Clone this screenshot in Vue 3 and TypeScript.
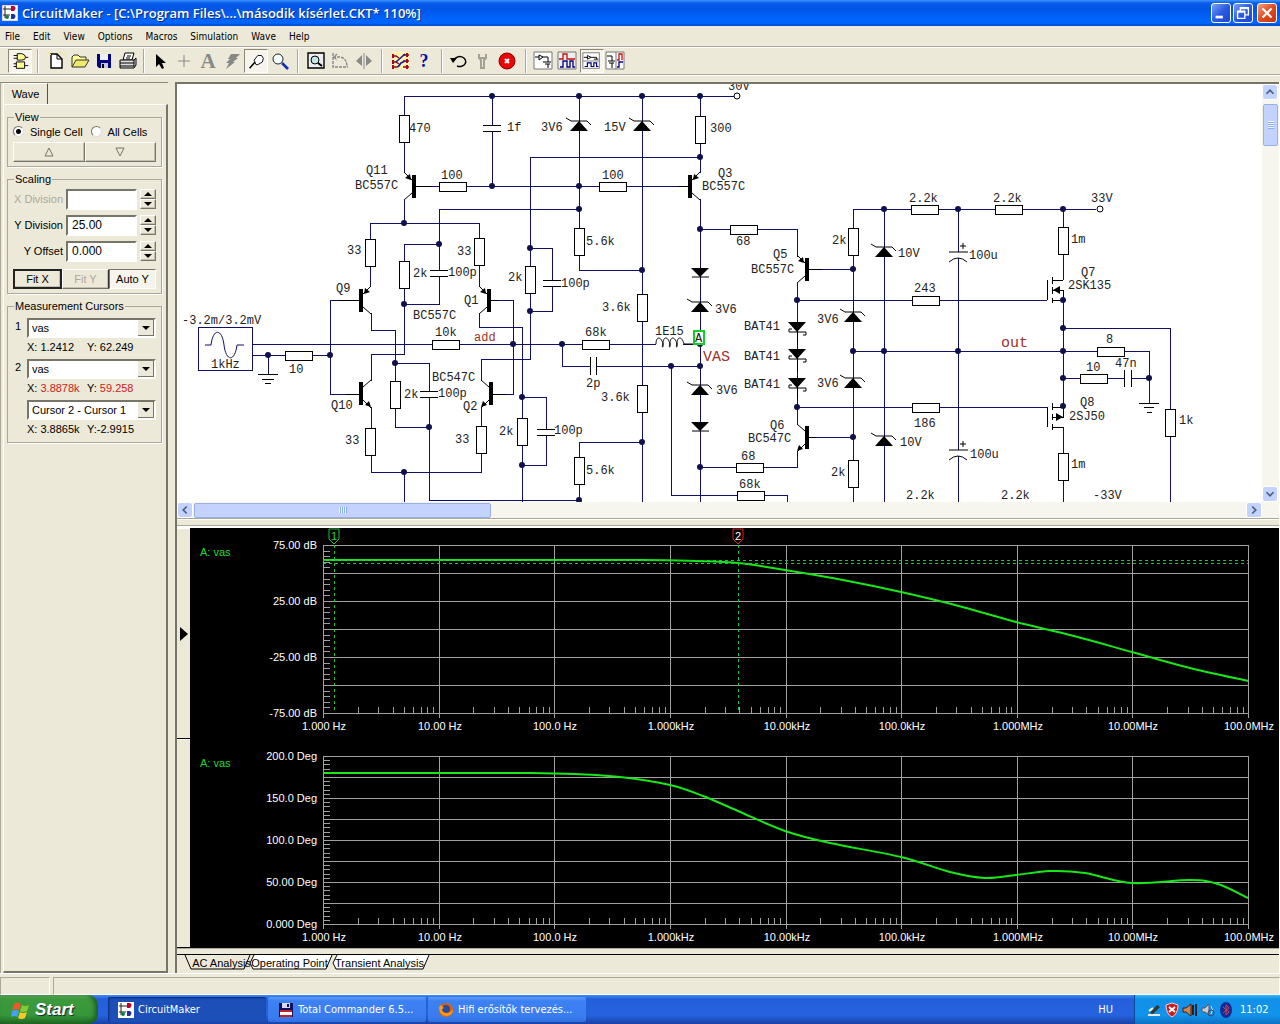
<script setup lang="ts">
import { ref } from 'vue'

type Pt = [number, number]
interface Label { x: number; y: number; t: string }
interface Transistor { x: number; y: number; sx: number; sy: number; pnp: boolean }

const menus = ['File', 'Edit', 'View', 'Options', 'Macros', 'Simulation', 'Wave', 'Help']
const viewMode = ref('single')
const yDivision = ref('25.00')
const yOffset = ref('0.000')

const wires = [
  'M404 96H734', 'M404 96V173', 'M404 200V223', 'M370 223H479', 'M370 223V287', 'M415 186H690',
  'M492 96V125M492 131V186', 'M579 96V270H642', 'M642 96V502', 'M700 96V173', 'M700 157H530V359H481V381',
  'M439 209H579', 'M439 209V270M439 277V304H404', 'M404 244H439', 'M404 244V354H371V381',
  'M371 313V330H395V427H429', 'M395 363H429V391M429 398V500H579', 'M330 300H360M330 300V394H360',
  'M252 344H656', 'M683 344H700', 'M252 355H330', 'M268 355V374', 'M371 407V472H481V407', 'M404 472V502',
  'M479 223V287', 'M479 313V327H522V502', 'M490 300H513V394H492', 'M530 248H552V280M552 286V311H530',
  'M522 397H546V429M546 435V465H522', 'M562 344V366H590M596 366H700', 'M671 366V495H787V502',
  'M642 442H579V500', 'M700 199V502', 'M700 229H797V257', 'M700 467H797V451', 'M797 283V425',
  'M808 269H853', 'M808 437H853', 'M853 502V209H1096', 'M884 209V502', 'M958 209V252M958 258V450M958 456V502',
  'M797 300H1047', 'M797 407H1047', 'M853 351H1149V403', 'M1063 209V280', 'M1063 300V407',
  'M1063 427V502', 'M1063 328H1170V502', 'M1063 378H1124M1131 378H1149',
]
const dots: Pt[] = [
  [492, 96], [579, 96], [642, 96], [700, 96], [492, 186], [579, 186], [404, 223], [700, 157], [579, 209],
  [439, 244], [404, 304], [330, 355], [268, 355], [395, 363], [429, 427], [404, 472], [530, 248], [530, 311],
  [642, 270], [513, 344], [562, 344], [700, 344], [671, 366], [700, 366], [522, 397], [522, 465], [642, 442],
  [579, 500], [700, 229], [700, 467], [853, 269], [853, 351], [853, 437], [884, 209], [884, 351], [958, 209],
  [958, 351], [797, 300], [797, 407], [1063, 209], [1063, 300], [1063, 328], [1063, 351], [1063, 378],
  [1063, 406], [1149, 378],
]
/* upright resistors: centre x, top y */
const upright: Pt[] = [
  [404, 115], [370, 239], [404, 261], [395, 381], [370, 428], [479, 238], [481, 426], [530, 266], [522, 418],
  [579, 228], [579, 457], [642, 294], [642, 385], [700, 116], [853, 228], [853, 460], [1063, 227], [1063, 453],
  [1170, 409],
]
/* lying resistors: left x, centre y */
const lying: Pt[] = [
  [439, 186], [599, 186], [432, 344], [285, 355], [582, 344], [730, 229], [736, 467], [737, 495], [911, 209],
  [995, 209], [912, 300], [912, 407], [1097, 351], [1080, 378],
]
const zeners: Pt[] = [
  [579, 121], [642, 121], [700, 302], [700, 385], [853, 312], [853, 378], [884, 247], [884, 436],
]
const diodes: Pt[] = [[700, 268], [700, 422]]
const schottkys: Pt[] = [[797, 322], [797, 349], [797, 378]]
const flatCaps: Pt[] = [[492, 125], [439, 270], [429, 391], [552, 280], [546, 429]]
const polarCaps: Pt[] = [[958, 252], [958, 450]]
const transistors: Transistor[] = [
  { x: 413, y: 186, sx: 1, sy: 1, pnp: true },
  { x: 362, y: 300, sx: -1, sy: 1, pnp: true },
  { x: 362, y: 394, sx: -1, sy: -1, pnp: false },
  { x: 488, y: 300, sx: 1, sy: 1, pnp: true },
  { x: 490, y: 394, sx: 1, sy: -1, pnp: false },
  { x: 691, y: 186, sx: -1, sy: 1, pnp: true },
  { x: 806, y: 269, sx: 1, sy: 1, pnp: true },
  { x: 806, y: 438, sx: 1, sy: -1, pnp: false },
]
const rows: [number, number, string][] = [
  [728, 90, '30V'], [409, 132, '470'], [507, 131, '1f'], [541, 131, '3V6'], [604, 131, '15V'], [710, 132, '300'],
  [366, 174, 'Q11'], [355, 189, 'BC557C'], [441, 179, '100'], [602, 179, '100'], [718, 177, 'Q3'],
  [702, 190, 'BC557C'], [347, 254, '33'], [457, 255, '33'], [413, 277, '2k'], [448, 276, '100p'],
  [508, 281, '2k'], [561, 287, '100p'], [586, 245, '5.6k'], [736, 245, '68'], [336, 292, 'Q9'],
  [464, 304, 'Q1'], [413, 319, 'BC557C'], [182, 324, '-3.2m/3.2mV'], [211, 368, '1kHz'], [289, 373, '10'],
  [435, 336, '10k'], [585, 336, '68k'], [655, 335, '1E15'], [602, 311, '3.6k'], [715, 313, '3V6'],
  [586, 387, '2p'], [601, 401, '3.6k'], [716, 394, '3V6'], [432, 381, 'BC547C'], [404, 398, '2k'],
  [438, 397, '100p'], [331, 409, 'Q10'], [463, 410, 'Q2'], [345, 444, '33'], [455, 443, '33'],
  [499, 435, '2k'], [554, 434, '100p'], [586, 474, '5.6k'], [741, 460, '68'], [739, 488, '68k'],
  [773, 258, 'Q5'], [751, 273, 'BC557C'], [832, 244, '2k'], [898, 257, '10V'], [969, 259, '100u'],
  [909, 202, '2.2k'], [993, 202, '2.2k'], [1091, 202, '33V'], [914, 292, '243'], [817, 323, '3V6'],
  [744, 330, 'BAT41'], [744, 360, 'BAT41'], [744, 388, 'BAT41'], [817, 387, '3V6'], [770, 429, 'Q6'],
  [748, 442, 'BC547C'], [914, 427, '186'], [900, 446, '10V'], [970, 458, '100u'], [831, 476, '2k'],
  [906, 499, '2.2k'], [1001, 499, '2.2k'], [1093, 499, '-33V'], [1071, 243, '1m'], [1081, 276, 'Q7'],
  [1068, 289, '2SK135'], [1106, 343, '8'], [1086, 371, '10'], [1115, 367, '47n'], [1179, 424, '1k'],
  [1080, 406, 'Q8'], [1069, 420, '2SJ50'], [1071, 468, '1m'],
]
const labels: Label[] = rows.map(([x, y, t]) => ({ x, y, t }))

/* logarithmic frequency axis: eight decades across the plot */
const left = 323
const right = 1248
const decade = (right - left) / 8
const gx = (n: number) => Math.round(left + n * decade)
const freqs = ['1.000 Hz', '10.00 Hz', '100.0 Hz', '1.000kHz', '10.00kHz', '100.0kHz', '1.000MHz', '10.00MHz', '100.0MHz']
const logTicks: number[] = []
for (let d = 0; d < 8; d++) for (let m = 2; m < 10; m++) logTicks.push(Math.round(left + decade * (d + Math.log10(m))))

interface Plot { top: number; step: number; lines: number; ticks: number; names: string[]; curve: Pt[] }
const plots: Plot[] = [
  {
    top: 545, step: 28, lines: 6, ticks: 30, names: ['75.00 dB', '25.00 dB', '-25.00 dB', '-75.00 dB'],
    curve: [[323, 560], [500, 560], [640, 560], [695, 561], [738, 563], [785, 570], [843, 580], [901, 592], [955, 605], [1016, 622],
      [1074, 636], [1132, 652], [1190, 668], [1248, 681]],
  },
  {
    top: 756, step: 21, lines: 8, ticks: 40, names: ['200.0 Deg', '150.0 Deg', '100.0 Deg', '50.00 Deg', '0.000 Deg'],
    curve: [[323, 773], [440, 773], [530, 773], [575, 774], [620, 777], [670, 785], [703, 796], [738, 811], [785, 831], [830, 843],
      [901, 857], [950, 872], [985, 878], [1016, 875], [1050, 871], [1085, 873], [1132, 883], [1190, 880], [1218, 884], [1248, 898]],
  },
]
const bottom = (p: Plot) => p.top + p.step * p.lines
const ticksOf = (p: Plot) => Array.from({ length: p.ticks - 1 }, (_, i) => Math.round(p.top + ((i + 1) * p.step * p.lines) / p.ticks))
/* smooth path through the samples */
const smooth = (pts: Pt[]) => {
  let d = `M${pts[0][0]} ${pts[0][1]}`
  for (let i = 0; i < pts.length - 1; i++) {
    const a = pts[Math.max(i - 1, 0)], b = pts[i], c = pts[i + 1], e = pts[Math.min(i + 2, pts.length - 1)]
    d += `C${b[0] + (c[0] - a[0]) / 6} ${b[1] + (c[1] - a[1]) / 6} ${c[0] - (e[0] - b[0]) / 6} ${c[1] - (e[1] - b[1]) / 6} ${c[0]} ${c[1]}`
  }
  return d
}
</script>

<template>
  <div class="desktop">
    <header class="titlebar">
      <svg class="ico" viewBox="0 0 16 16"><rect width="16" height="16" fill="#fff" /><path d="M1 4h8M3 1v12M1 10h7" stroke="#222" fill="none" /><path d="M9 1h3q3 2 0 5H9z" fill="#c00030" /><path d="M9 9h3q3 2 0 5H9z" fill="#2030a0" /><circle cx="5" cy="12" r="2" fill="#108040" /><path d="M0 0h16v16H0z" fill="none" stroke="#d8a8c8" /></svg>
      <h1>CircuitMaker - [C:\Program Files\...\második kísérlet.CKT* 110%]</h1>
      <button class="wb" aria-label="Minimize"><svg viewBox="0 0 20 20"><path d="M4 13h8v3H4z" fill="#fff" /></svg></button>
      <button class="wb" aria-label="Restore"><svg viewBox="0 0 20 20"><path d="M7 8V4h9v8h-4M7 5h9M4 8h8v8H4zM4 9h8" fill="none" stroke="#fff" stroke-width="1.5" /></svg></button>
      <button class="wb close" aria-label="Close"><svg viewBox="0 0 20 20"><path d="M5 5l10 10M15 5L5 15" stroke="#fff" stroke-width="2.4" /></svg></button>
    </header>

    <nav class="menubar"><button v-for="m in menus" :key="m">{{ m }}</button></nav>

    <div class="toolbar">
      <button class="on" aria-label="Parts"><svg viewBox="0 0 24 24"><path d="M9 4h5q4 1 4 4t-4 3H9zM5 6h4M5 9h4M18 8h3" fill="#ffff90" stroke="#000" /><path d="M8 13h9v7H8zM5 15h3M5 18h3M17 17h4" fill="#ffff90" stroke="#000" /></svg></button>
      <i class="sep"></i>
      <button aria-label="New"><svg viewBox="0 0 24 24"><path d="M7 5h6l5 5v9H7z" fill="#fff" stroke="#000" stroke-width="1.4" /><path d="M13 5v5h5" fill="none" stroke="#000" /><path d="M4 3l3 3M16 3v3M19 6l3-2" stroke="#f0ec60" /></svg></button>
      <button aria-label="Open"><svg viewBox="0 0 24 24"><path d="M4 18V8l2-2h4l2 2h6v3" fill="#ffff90" stroke="#333" /><path d="M4 18l4-7h13l-4 7z" fill="#f0e870" stroke="#333" /></svg></button>
      <button aria-label="Save"><svg viewBox="0 0 24 24"><path d="M5 5h14v14H7l-2-2z" fill="#000080" /><path d="M8 5h8v6H8z" fill="#eef" /><path d="M9 14h7v5H9z" fill="#c8c8d8" /><path d="M10 15h2v4h-2z" fill="#000" /></svg></button>
      <button aria-label="Print"><svg viewBox="0 0 24 24"><path d="M7 11l2-7h9l-2 7zM11 7h4M10 9h4" fill="#fff" stroke="#000" /><path d="M4 11h14l2-2v7l-2 3H4zM4 14h14M4 17h14M18 11v7" fill="#ddd" stroke="#000" /></svg></button>
      <i class="sep tight"></i>
      <button aria-label="Arrow"><svg viewBox="0 0 24 24"><path d="M8 5v13l3-3 3 5 2-1-2-5h4z" /></svg></button>
      <button aria-label="Wire"><svg viewBox="0 0 24 24"><path d="M12 6v12M6 12h12" stroke="#888" fill="none" /></svg></button>
      <button class="serif" aria-label="Text">A</button>
      <button aria-label="Delete"><svg viewBox="0 0 24 24"><path d="M11 5h9l-4 4h2l-5 4h2l-9 7 3-6H6l4-4H8z" fill="#888" /></svg></button>
      <button class="on" aria-label="Probe"><svg viewBox="0 0 24 24"><path d="M5 20l6-7" stroke="#000" stroke-width="1.6" /><path d="M10 11l4-5h4l2 3-1 4-5 3h-2z" fill="#fff" stroke="#000" /></svg></button>
      <button aria-label="Magnify"><svg viewBox="0 0 24 24"><circle cx="10" cy="10" r="5" fill="#f4ffff" stroke="#222" /><path d="M14 14l6 6" stroke="#1030b0" stroke-width="2.6" /></svg></button>
      <i class="sep"></i>
      <button aria-label="Fit"><svg viewBox="0 0 24 24"><path d="M4 4h16v15H4z" fill="#eee" stroke="#000" stroke-width="1.4" /><circle cx="11" cy="11" r="4" fill="#bfe8ea" stroke="#000" /><path d="M14 14l4 3" stroke="#000" stroke-width="2" /></svg></button>
      <button aria-label="Rotate"><svg viewBox="0 0 24 24"><path d="M5 4v14h15M5 8h7q7 1 7 10M9 5L6 8l3 3" fill="none" stroke="#888" stroke-width="1.4" stroke-dasharray="3 1" /></svg></button>
      <button aria-label="Mirror"><svg viewBox="0 0 24 24"><path d="M10 6v11l-6-5zM14 6v11l6-5z" fill="#888" /><path d="M12 4v16" stroke="#888" /></svg></button>
      <i class="sep"></i>
      <button aria-label="Mode"><svg viewBox="0 0 24 24"><path d="M4 3h17v17H4z" fill="#fff3a8" /><path d="M4 7h4l3 2M15 6h6M4 13h4l3 2M4 18h5l3-2M15 12h6M15 18h6" stroke="#900030" stroke-width="1.4" fill="none" /><path d="M8 13l9-8M10 18l3-4 4-2" stroke="#1020a0" stroke-width="1.6" fill="none" /><path d="M5 5v4M5 11v4M5 16v4M19 4v4M19 10v4M19 16v4" stroke="#b00020" stroke-width="2" /></svg></button>
      <button class="help" aria-label="Help">?</button>
      <i class="sep"></i>
      <button aria-label="Reset"><svg viewBox="0 0 24 24"><path d="M6 11a6 5 0 1 1 3 6" fill="none" stroke="#000" stroke-width="1.4" /><path d="M2 9l7 0-4 5z" /></svg></button>
      <button aria-label="Options"><svg viewBox="0 0 24 24"><path d="M7 5v4l2 2v8h3v-8l2-2V5M8 9h5" fill="none" stroke="#a4a294" stroke-width="2" /></svg></button>
      <button aria-label="Stop"><svg viewBox="0 0 24 24"><circle cx="11" cy="12" r="8" fill="#e80808" stroke="#800" /><path d="M9 10l4 4M13 10l-4 4" stroke="#fff" stroke-width="2" /></svg></button>
      <i class="sep"></i>
      <button aria-label="Schematic"><svg viewBox="0 0 24 24"><path d="M2 3h18v17H2z" fill="#fff" stroke="#777" /><path d="M3 8h4M7 6v5l4-3zM11 8h5v5M11 13h8M13 15h5M16 15v4" fill="none" stroke="#000" /></svg></button>
      <button aria-label="Waves"><svg viewBox="0 0 24 24"><path d="M2 3h18v17H2z" fill="#eee" stroke="#777" /><path d="M3 10h4V5h4v5h8" fill="none" stroke="#c01010" stroke-width="1.3" /><path d="M4 18h3v-6h4v6h3v-6h3v6h2" fill="none" stroke="#000080" stroke-width="1.3" /></svg></button>
      <button class="on" aria-label="Split horizontal"><svg viewBox="0 0 24 24"><path d="M2 3h18v17H2z" fill="#fff" stroke="#777" /><path d="M2 12h18" stroke="#777" /><path d="M3 8h4M7 6v4l4-2zM11 8h6v2M14 10h5" fill="none" stroke="#000" /><path d="M4 18h3v-4h4v4h3v-4h3v4h2" fill="none" stroke="#000080" stroke-width="1.3" /></svg></button>
      <button aria-label="Split vertical"><svg viewBox="0 0 24 24"><path d="M2 3h18v17H2zM12 3v17" fill="#fff" stroke="#777" /><path d="M3 7h5v5M4 12h7M5 14h5M8 14v5" fill="none" stroke="#000" /><path d="M13 11h2V5h3v6" fill="none" stroke="#c01010" stroke-width="1.3" /><path d="M13 18h2v-5h4" fill="none" stroke="#000080" stroke-width="1.3" /></svg></button>
    </div>

    <main class="work">
      <aside class="side">
        <button class="tab">Wave</button>
        <div class="sheet">
          <fieldset>
            <legend>View</legend>
            <div class="radios">
              <label><input v-model="viewMode" type="radio" value="single" />Single Cell</label>
              <label><input v-model="viewMode" type="radio" value="all" />All Cells</label>
            </div>
            <div class="pair">
              <button aria-label="Previous cell"><svg viewBox="0 0 12 12"><path d="M6 2l4 8H2z" /></svg></button>
              <button aria-label="Next cell"><svg viewBox="0 0 12 12"><path d="M6 10l4-8H2z" /></svg></button>
            </div>
          </fieldset>
          <fieldset class="scaling">
            <legend>Scaling</legend>
            <div class="field"><label class="off" for="xd">X Division</label><input id="xd" disabled /><span class="spin"><button aria-label="Up"></button><button class="dn" aria-label="Down"></button></span></div>
            <div class="field"><label for="yd">Y Division</label><input id="yd" v-model="yDivision" /><span class="spin"><button aria-label="Up"></button><button class="dn" aria-label="Down"></button></span></div>
            <div class="field"><label for="yo">Y Offset</label><input id="yo" v-model="yOffset" /><span class="spin"><button aria-label="Up"></button><button class="dn" aria-label="Down"></button></span></div>
            <div class="fits"><button class="def">Fit X</button><button disabled>Fit Y</button><button class="down">Auto Y</button></div>
          </fieldset>
          <fieldset class="cursors">
            <legend>Measurement Cursors</legend>
            <div class="cur"><label for="c1">1</label><select id="c1"><option>vas</option></select></div>
            <p><span>X: 1.2412</span><span>Y: 62.249</span></p>
            <div class="cur"><label for="c2">2</label><select id="c2"><option>vas</option></select></div>
            <p><span>X: <b>3.8878k</b></span><span>Y: <b>59.258</b></span></p>
            <div class="cur"><label for="c3"></label><select id="c3" aria-label="Difference"><option>Cursor 2 - Cursor 1</option></select></div>
            <p><span>X: 3.8865k</span><span>Y:-2.9915</span></p>
          </fieldset>
        </div>
      </aside>

      <section class="panes">
        <div class="upper">
          <div class="sheetrow">
            <svg class="schem" height="418">
              <g transform="translate(-177 -84)">
                <g class="wire">
                  <path v-for="w in wires" :key="w" :d="w" />
                  <path d="M198 327h54v43h-54z" />
                </g>
                <path class="sine" d="M205 345h6c2-17 11-17 13 0s11 17 13 0h7" />
                <g class="part">
                  <rect v-for="r in upright" :key="`u${r}`" :x="r[0] - 5" :y="r[1]" width="10" height="27" />
                  <rect v-for="r in lying" :key="`l${r}`" :x="r[0]" :y="r[1] - 4" width="27" height="9" />
                  <path v-for="c in flatCaps" :key="`c${c}`" :d="`M${c[0] - 9} ${c[1]}h18m-18 6h18`" />
                  <path d="M590 357v18M596 357v18M1124 370v17M1131 370v17" />
                  <path d="M258 374h20M262 379h12M265 383h6M1139 403h20M1144 407h10M1147 412h5" />
                  <path d="M415 186h17M339 300h21M346 394h14M490 300h8M492 394h14M678 186h12M808 269h14M808 437h8M797 323v20M797 350v22M797 377v22" />
                </g>
                <g class="thin">
                  <path v-for="c in polarCaps" :key="`p${c}`" :d="`M${c[0] - 9} ${c[1]}h19M${c[0] - 9} ${c[1] + 10}q9-8 18 0M${c[0] + 2} ${c[1] - 6}h6m-3-3v6`" />
                  <path d="M656 344c0-8 5-8 7 0c-2 4 1 4 0 0c0-8 5-8 7 0c-2 4 1 4 0 0c0-8 5-8 7 0c-2 4 1 4 0 0c0-8 5-8 7 0h13" />
                  <g v-for="z in zeners" :key="`z${z}`" :transform="`translate(${z[0]} ${z[1]})`"><path d="M-13-3l5 3H8l4 4" /><path class="solid" d="M0 0L9 10H-9z" /></g>
                  <g v-for="z in diodes" :key="`d${z}`" :transform="`translate(${z[0]} ${z[1]})`"><path class="solid" d="M-9 0H9L0 9z" /><path d="M-8 9H9" /></g>
                  <g v-for="z in schottkys" :key="`s${z}`" :transform="`translate(${z[0]} ${z[1]})`"><path class="solid" d="M-9 0H9L0 10z" /><path d="M-5 7H-8V10H9V13H6" /></g>
                  <g v-for="q in transistors" :key="`q${q.x}-${q.y}`" :transform="`translate(${q.x} ${q.y}) scale(${q.sx} ${q.sy})`">
                    <path class="solid" d="M-1-11H3V12H-1z" /><path d="M-1-6L-9-14M-1 7L-9 14" />
                    <path class="solid" :d="q.pnp ? 'M-2-6L-8-8L-3-12z' : 'M-9-13L-3-11L-7-7z'" />
                  </g>
                  <path class="crisp" d="M1047 280V300M1052 277V284M1052 287V294M1052 298V303M1052 280H1063M1052 300H1063M1053 290H1063V300" />
                  <path class="solid" d="M1053 290l7-4v8z" />
                  <path class="crisp" d="M1047 407V427M1052 403V410M1052 414V420M1052 424V430M1052 407H1063M1052 427H1063M1053 417H1063V407" />
                  <path class="solid" d="M1063 417l-7-4v8z" />
                </g>
                <circle v-for="d in dots" :key="`o${d}`" class="dot" :cx="d[0]" :cy="d[1]" r="3" />
                <circle class="term" cx="737" cy="96" r="3" /><circle class="term" cx="1100" cy="209" r="3" />
                <text v-for="l in labels" :key="`${l.x}-${l.y}`" :x="l.x" :y="l.y">{{ l.t }}</text>
                <text class="net" x="474" y="341">add</text>
                <text class="net big" x="703" y="361">VAS</text>
                <text class="net big" x="1001" y="347">out</text>
                <rect class="probe" x="694" y="331" width="10" height="13" /><text x="695" y="342">A</text>
              </g>
            </svg>
            <div class="vbar"><button class="sb" aria-label="Scroll up"><svg viewBox="0 0 16 16"><path d="M4 10l4-4 4 4" /></svg></button><i class="vthumb"></i><button class="sb" aria-label="Scroll down"><svg viewBox="0 0 16 16"><path d="M4 6l4 4 4-4" /></svg></button></div>
          </div>
          <div class="hbar"><button class="sb" aria-label="Scroll left"><svg viewBox="0 0 16 16"><path d="M10 4L6 8l4 4" /></svg></button><i class="hthumb"></i><button class="sb end" aria-label="Scroll right"><svg viewBox="0 0 16 16"><path d="M6 4l4 4-4 4" /></svg></button></div>
        </div>
        <div class="splitter"></div>
        <div class="lower">
          <div class="gutter"><div class="g1"><i></i></div><div class="g2"></div></div>
          <svg class="plots" viewBox="190 528 1089 420">
            <template v-for="(p, i) in plots" :key="i">
              <g class="grid">
                <path v-for="n in p.lines + 1" :key="`h${n}`" :d="`M${left} ${p.top + (n - 1) * p.step}H${right}`" />
                <path v-for="n in 9" :key="`v${n}`" :d="`M${gx(n - 1)} ${p.top}V${bottom(p) + 5}`" />
                <path v-for="t in logTicks" :key="`t${t}`" :d="`M${t} ${bottom(p)}v-6`" />
                <path v-for="t in ticksOf(p)" :key="`y${t}`" :d="`M${left} ${t}h7`" />
              </g>
              <text v-for="(n, k) in p.names" :key="n" class="r" x="317" :y="p.top + 4 + k * (bottom(p) - p.top) / (p.names.length - 1)">{{ n }}</text>
              <text v-for="(f, k) in freqs" :key="f" class="m" :x="gx(k) + 1" :y="bottom(p) + 17">{{ f }}</text>
              <text class="sig" x="200" :y="p.top + 11">A: vas</text>
              <path class="trace" :d="smooth(p.curve)" />
            </template>
            <path class="cursor" d="M334 545V713M738 545V713M323 560H1248M323 563H1248" />
            <path class="flag" d="M329 529h10v10l-5 5-5-5z" /><text class="fl" x="334" y="540">1</text>
            <path class="flag red" d="M733 529h10v10l-5 5-5-5z" /><text class="fl w" x="738" y="540">2</text>
          </svg>
        </div>
        <div class="tabs">
          <div class="sheettab t1"><svg viewBox="0 0 70 15"><path d="M0 0l6 14h53l6-14" /></svg><button>AC Analysis</button></div>
          <div class="sheettab t2"><svg viewBox="0 0 84 15"><path d="M4 0L0 8l3 6h73l6-14" /></svg><button>Operating Point</button></div>
          <div class="sheettab t3"><svg viewBox="0 0 98 15"><path d="M4 0L0 8l3 6h87l6-14" /></svg><button>Transient Analysis</button></div>
        </div>
      </section>
    </main>

    <div class="status"><span></span><span></span></div>

    <footer class="taskbar">
      <button class="start"><svg viewBox="0 0 20 20"><path d="M3 4q4-3 7 0L8 10q-3-2-7 0z" fill="#f0582a" /><path d="M11 5q3 2 7 0l-2 6q-4 2-7 0z" fill="#84cc30" /><path d="M1 11q4-2 7 0l-2 6q-3-2-6 0z" fill="#48a0f0" /><path d="M9 12q3 2 7 0l-2 6q-4 2-7 0z" fill="#f8c828" /></svg>Start</button>
      <button class="task active"><svg viewBox="0 0 16 16"><rect width="16" height="16" fill="#fff" /><path d="M1 4h8M3 1v12M1 10h7" stroke="#222" fill="none" /><path d="M9 1h3q3 2 0 5H9z" fill="#c00030" /><path d="M9 9h3q3 2 0 5H9z" fill="#2030a0" /><circle cx="5" cy="12" r="2" fill="#108040" /></svg>CircuitMaker</button>
      <button class="task"><svg viewBox="0 0 16 16"><path d="M1 1h14v14H1z" fill="#101060" /><path d="M4 1h8v5H4z" fill="#d8d8f0" /><path d="M9 2h2v3H9z" fill="#101060" /><path d="M2 8h12v7H2z" fill="#fff" /><path d="M2 9h12M2 14h12" stroke="#c02020" stroke-width="2" /></svg>Total Commander 6.5...</button>
      <button class="task"><svg viewBox="0 0 16 16"><circle cx="8" cy="8" r="7" fill="#e66000" /><circle cx="8" cy="7" r="4" fill="#2a4a9a" /><path d="M1 6q1 8 8 8 6-1 6-7-2 4-6 4-5 0-5-4l2-1-3-3q-2 1-2 3z" fill="#ff9a10" /></svg>Hifi erősítők tervezés...</button>
      <span class="lang">HU</span>
      <div class="tray">
        <svg viewBox="0 0 16 16"><path d="M2 12h12v2H2z" fill="#e8e8e8" /><path d="M4 11L11 3l3 2-7 7z" fill="#333" /><path d="M3 9l4-3" stroke="#fff" stroke-width="2" /></svg>
        <svg viewBox="0 0 16 16"><path d="M8 1l6 2q0 9-6 12Q2 12 2 3z" fill="#d01818" stroke="#f4d0d0" /><path d="M5 5l6 5M11 5l-6 5" stroke="#fff" stroke-width="2" /></svg>
        <svg viewBox="0 0 16 16"><path d="M1 6h3l5-4v12l-5-4H1z" fill="#c8865a" stroke="#402010" /><path d="M11 3v10M14 2v12" stroke="#222" stroke-width="2" /></svg>
        <svg viewBox="0 0 16 16"><path d="M2 6h3l4-4v11l-4-3H2z" fill="#c8ccd8" stroke="#556" /><path d="M11 4q3 4 0 8" fill="none" stroke="#dde" /><circle cx="11" cy="11" r="3" fill="none" stroke="#446" /></svg>
        <svg viewBox="0 0 16 16"><ellipse cx="8" cy="8" rx="6" ry="8" fill="#0c2c9c" /><path d="M5 5l6 5-3 3V3l3 3-6 5" fill="none" stroke="#e04040" /></svg>
        <time>11:02</time>
      </div>
    </footer>
  </div>
</template>

<style>
body { background: #ece9d8; }
</style>

<style scoped>
* { box-sizing: border-box; }
button, input, select { font: inherit; color: inherit; margin: 0; padding: 0; border: 0; background: none; border-radius: 0; outline: 0; }
.desktop { display: flex; flex-direction: column; min-height: 100vh; background: #ece9d8; color: #000; font: 11px/14px "Liberation Sans", Arial, sans-serif; overflow: hidden; }
.titlebar { display: flex; align-items: center; height: 26px; padding: 0 3px 0 2px; gap: 2px; background: linear-gradient(#3d95ff 0, #0a5ce8 3px, #0055e5 9px, #0062fa 18px, #0066ff 23px, #0046c8 26px); }
.ico { width: 16px; height: 16px; }
h1 { flex: 1; margin: 0 0 0 2px; color: #fff; font: 600 13px/20px "Open Sans", "Noto Sans", sans-serif; text-shadow: 1px 1px #0a2a80; white-space: nowrap; }
.wb { width: 20px; height: 20px; border: 1px solid #fff; border-radius: 3px; background: linear-gradient(135deg, #7ba2f4, #2a5be0 50%, #1c48d0); }
.wb svg { display: block; width: 18px; height: 18px; }
.close { background: linear-gradient(135deg, #f0a080, #e04c20 50%, #c83408); margin-left: 2px; }
.menubar { display: flex; gap: 13px; height: 20px; padding: 2px 0 0 5px; font: 10px/14px "DejaVu Sans Condensed", "DejaVu Sans", sans-serif; }
.toolbar { display: flex; align-items: center; height: 29px; padding-left: 8px; border-top: 1px solid #aca899; border-bottom: 1px solid #aca899; box-shadow: inset 0 1px #fff, 0 1px #fff; margin-bottom: 7px; }
.toolbar button { flex: none; width: 24px; height: 24px; }
.toolbar svg { display: block; width: 24px; height: 24px; }
.toolbar .on { border: 1px solid; border-color: #8c8878 #fff #fff #8c8878; background: #f6f4ec; }
.toolbar .on svg { width: 22px; height: 22px; }
.sep { flex: none; width: 2px; height: 24px; margin: 0 5px; border-left: 1px solid #aca899; border-right: 1px solid #fff; }
.tight { margin: 0 3px; }
.serif { font: bold 21px/24px "Liberation Serif", serif; color: #888; }
.help { font: bold 18px/24px "Liberation Serif", serif; color: #0010a0; }
.work { flex: 1; display: flex; }
.side { flex: none; width: 168px; margin-right: 7px; display: flex; flex-direction: column; align-items: flex-start; padding-left: 2px; border-top: 1px solid #8c8878; border-left: 1px solid #aca899; }
.tab { width: 45px; height: 21px; border: solid; border-width: 1px 1px 0 1px; border-color: #fff #55524a #fff #fff; }
.sheet { flex: 1; align-self: stretch; display: flex; flex-direction: column; gap: 5px; padding: 5px 4px 0 3px; border: 1px solid #fff; border-right: 2px solid #77746a; border-bottom: 2px solid #77746a; }
fieldset { margin: 0; min-width: 0; padding: 0 5px 4px; border: 1px solid #aca899; box-shadow: 1px 1px #fff; height: 57px; }
legend { padding: 0 1px; margin-left: 1px; line-height: 14px; }
.radios { display: flex; gap: 8px; height: 17px; margin-top: -1px; }
.radios label { display: flex; align-items: center; gap: 6px; white-space: nowrap; }
.radios input { appearance: none; width: 11px; height: 11px; border-radius: 50%; background: #fff; border: 1px solid #77746a; border-right-color: #ddd; border-bottom-color: #ddd; }
.radios input:checked { background: radial-gradient(#000 0 2px, #fff 3px); }
.pair { display: flex; margin-top: 2px; }
.pair button { flex: 1; height: 20px; }
.pair svg { width: 12px; height: 12px; display: block; margin: auto; fill: none; stroke: #77746a; }
.pair button, .spin button, .fits button { border: 1px solid; border-color: #fff #77746a #77746a #fff; box-shadow: inset -1px -1px #c4c0b0; }
.scaling { height: 122px; padding-top: 2px; }
.field { display: flex; align-items: center; justify-content: flex-end; height: 22px; margin-bottom: 4px; gap: 3px; }
.field label { flex: none; white-space: nowrap; }
.off { color: #aca899; }
.field input { flex: none; width: 71px; height: 21px; padding: 0 4px; background: #fff; font-size: 12px; border: 2px solid; border-color: #77746a #fff #fff #77746a; }
.spin { flex: none; display: flex; flex-direction: column; width: 16px; height: 20px; }
.spin button { flex: 1; display: flex; align-items: center; justify-content: center; }
.spin button::before { content: ""; border: 4px solid transparent; border-top: 0; border-bottom: 4px solid #000; }
.spin .dn::before { border-bottom: 0; border-top: 4px solid #000; }
.fits { display: flex; padding-top: 3px; }
.fits button { flex: 1; height: 20px; }
.fits .def { border: 2px solid #222; }
.fits button:disabled { color: #aca899; border-right-color: #333; }
.fits .down { border-color: #77746a #fff #fff #77746a; background: #f6f4ec; box-shadow: none; }
.cursors { height: 144px; padding-top: 5px; }
.cur { display: flex; height: 20px; }
.cur label { width: 14px; padding-left: 2px; line-height: 17px; }
select { flex: 1; appearance: none; height: 20px; padding: 0 3px; border: 2px solid; border-color: #77746a #fff #fff #77746a; background: #fff url("data:image/svg+xml,%3Csvg xmlns='http://www.w3.org/2000/svg' width='16' height='16'%3E%3Cpath d='M0 0h16v16H0z' fill='%2377746a'/%3E%3Cpath d='M0 0h15v15H0z' fill='%23ece9d8'/%3E%3Cpath d='M4 6h8l-4 4z'/%3E%3C/svg%3E") right center no-repeat; }
.cursors p { display: flex; margin: 0 0 2px 14px; height: 19px; line-height: 19px; white-space: nowrap; }
.cursors p span { width: 60px; }
.cursors b { font-weight: normal; color: #d02020; }
.panes { flex: 1; min-width: 0; display: flex; flex-direction: column; border-left: 2px solid #77746a; border-right: 1px solid #fff; }
.upper { border-top: 2px solid #77746a; background: #fff; }
.sheetrow { display: flex; }
.schem { flex: 1; min-width: 0; display: block; overflow: hidden; font: 12px "Liberation Mono", "Courier New", monospace; }
.wire path { fill: none; stroke: #10106a; shape-rendering: crispEdges; }
.sine { fill: none; stroke: #10106a; }
.part rect { fill: #fff; stroke: #000; shape-rendering: crispEdges; }
.part path { fill: none; stroke: #000; shape-rendering: crispEdges; }
.thin path { fill: none; stroke: #000; }
.thin .solid { fill: #000; stroke: none; }
.thin .crisp { shape-rendering: crispEdges; }
.dot { fill: #10104a; }
.term { fill: #fff; stroke: #000; }
.schem text { fill: #222; }
.schem .net { fill: #a03028; }
.schem .big { font-size: 15px; }
.probe { fill: #fff; stroke: #10d028; stroke-width: 2; }
.vbar { flex: none; width: 17px; display: flex; flex-direction: column; justify-content: space-between; background: #f6f5ee; }
.hbar { display: flex; align-items: center; height: 17px; background: #f6f5ee; padding: 0 17px 0 0; border-bottom: 1px solid #aca899; }
.sb { flex: none; width: 16px; height: 16px; border: 1px solid #fff; border-radius: 3px; background: #c3d3fd; }
.sb svg { display: block; width: 14px; height: 14px; fill: none; stroke: #4d6185; stroke-width: 2; }
.vthumb { height: 42px; margin: 4px 1px auto; border: 1px solid #98b0e8; border-radius: 2px; background: repeating-linear-gradient(#eef4fe 0 1px, #8cb0f8 1px 2px) center / 6px 8px no-repeat, #c3d3fd; }
.hthumb { width: 297px; height: 15px; margin-left: 1px; border: 1px solid #98b0e8; border-radius: 2px; background: repeating-linear-gradient(90deg, #eef4fe 0 1px, #8cb0f8 1px 2px) center / 8px 6px no-repeat, #c3d3fd; }
.end { margin-left: auto; }
.splitter { height: 9px; border-top: 1px solid #fff; border-bottom: 2px solid #fff; background: linear-gradient(#ece9d8 0 5px, #aca899 5px); }
.lower { display: flex; }
.gutter { flex: none; width: 13px; display: flex; flex-direction: column; border-top: 1px solid #fff; }
.g1 { height: 210px; display: flex; align-items: center; border-bottom: 1px solid #000; padding-left: 3px; }
.g1 i { border: 7px solid transparent; border-left: 8px solid #000; border-right: 0; }
.g2 { flex: 1; border-bottom: 1px solid #000; border-top: 1px solid #fff; }
.plots { flex: 1; min-width: 0; display: block; background: #000; font: 11px "Liberation Sans", Arial, sans-serif; }
.plots text { fill: #fff; }
.plots .r { text-anchor: end; }
.plots .m, .plots .fl { text-anchor: middle; }
.plots .sig, .plots .fl { fill: #20d830; }
.plots .w { fill: #fff; }
.grid path { stroke: #a0a0a0; shape-rendering: crispEdges; }
.trace { fill: none; stroke: #18e818; stroke-width: 2; }
.cursor { fill: none; stroke: #20c040; stroke-dasharray: 3 3; shape-rendering: crispEdges; }
.flag { fill: none; stroke: #20c040; }
.red { stroke: #e02020; }
.tabs { flex: 1; min-height: 25px; display: flex; align-items: flex-start; padding: 7px 0 0 8px; background: linear-gradient(#aca899 0 1px, #ece9d8 1px 6px, #000 6px 7px, #ece9d8 7px); }
.sheettab { display: grid; }
.sheettab > * { grid-area: 1 / 1; }
.sheettab svg { height: 15px; overflow: visible; fill: #fff; stroke: #000; }
.sheettab button { z-index: 1; height: 15px; padding-right: 5px; white-space: nowrap; }
.t1 { width: 65px; }
.t1 svg { width: 70px; fill: #ece9d8; }
.t1 button { padding: 0 0 0 3px; }
.t2 { width: 83px; }
.t2 svg { width: 84px; }
.t3 { width: 98px; }
.t3 svg { width: 98px; }
.status { display: flex; gap: 3px; height: 22px; padding-top: 3px; border-top: 1px solid #fff; }
.status span { border: 1px solid; border-color: #aca899 #fff #fff #aca899; width: 50px; }
.status span + span { flex: 1; }
.taskbar { display: flex; align-items: stretch; height: 29px; color: #fff; font: 11px/14px "DejaVu Sans Condensed", "DejaVu Sans", sans-serif; background: linear-gradient(#3f8cf3 0, #245edb 4px, #2663e0 20px, #1941a5 29px); }
.start { display: flex; align-items: center; gap: 4px; width: 98px; padding-left: 11px; margin-right: 10px; border-radius: 0 10px 10px 0; background: linear-gradient(#74b873 0, #3c9a3c 4px, #36963a 20px, #206a24 29px); box-shadow: inset -3px 0 4px #1d5c20; font: italic bold 17px/20px "Liberation Sans", Arial, sans-serif; text-shadow: 1px 1px 1px #123; }
.start svg { width: 20px; height: 20px; }
.task { display: flex; align-items: center; gap: 4px; width: 158px; margin: 2px 2px 2px 0; padding-left: 10px; border-radius: 2px; background: linear-gradient(#5a9cf8 0, #3c81f3 4px, #3a7cf0 20px, #3070e0); white-space: nowrap; }
.task svg { width: 16px; height: 16px; flex: none; }
.active { background: #1c4fb8; box-shadow: inset 1px 1px 2px #0a2a70; }
.lang { margin: auto 21px auto auto; }
.tray { display: flex; align-items: center; gap: 2px; width: 146px; padding-left: 11px; background: linear-gradient(#2fbcf8 0, #1290e8 4px, #1194ec 20px, #0c70c0 29px); border-left: 1px solid #0c4a98; }
.tray svg { width: 16px; height: 16px; flex: none; }
.tray time { margin-left: 4px; }
</style>
